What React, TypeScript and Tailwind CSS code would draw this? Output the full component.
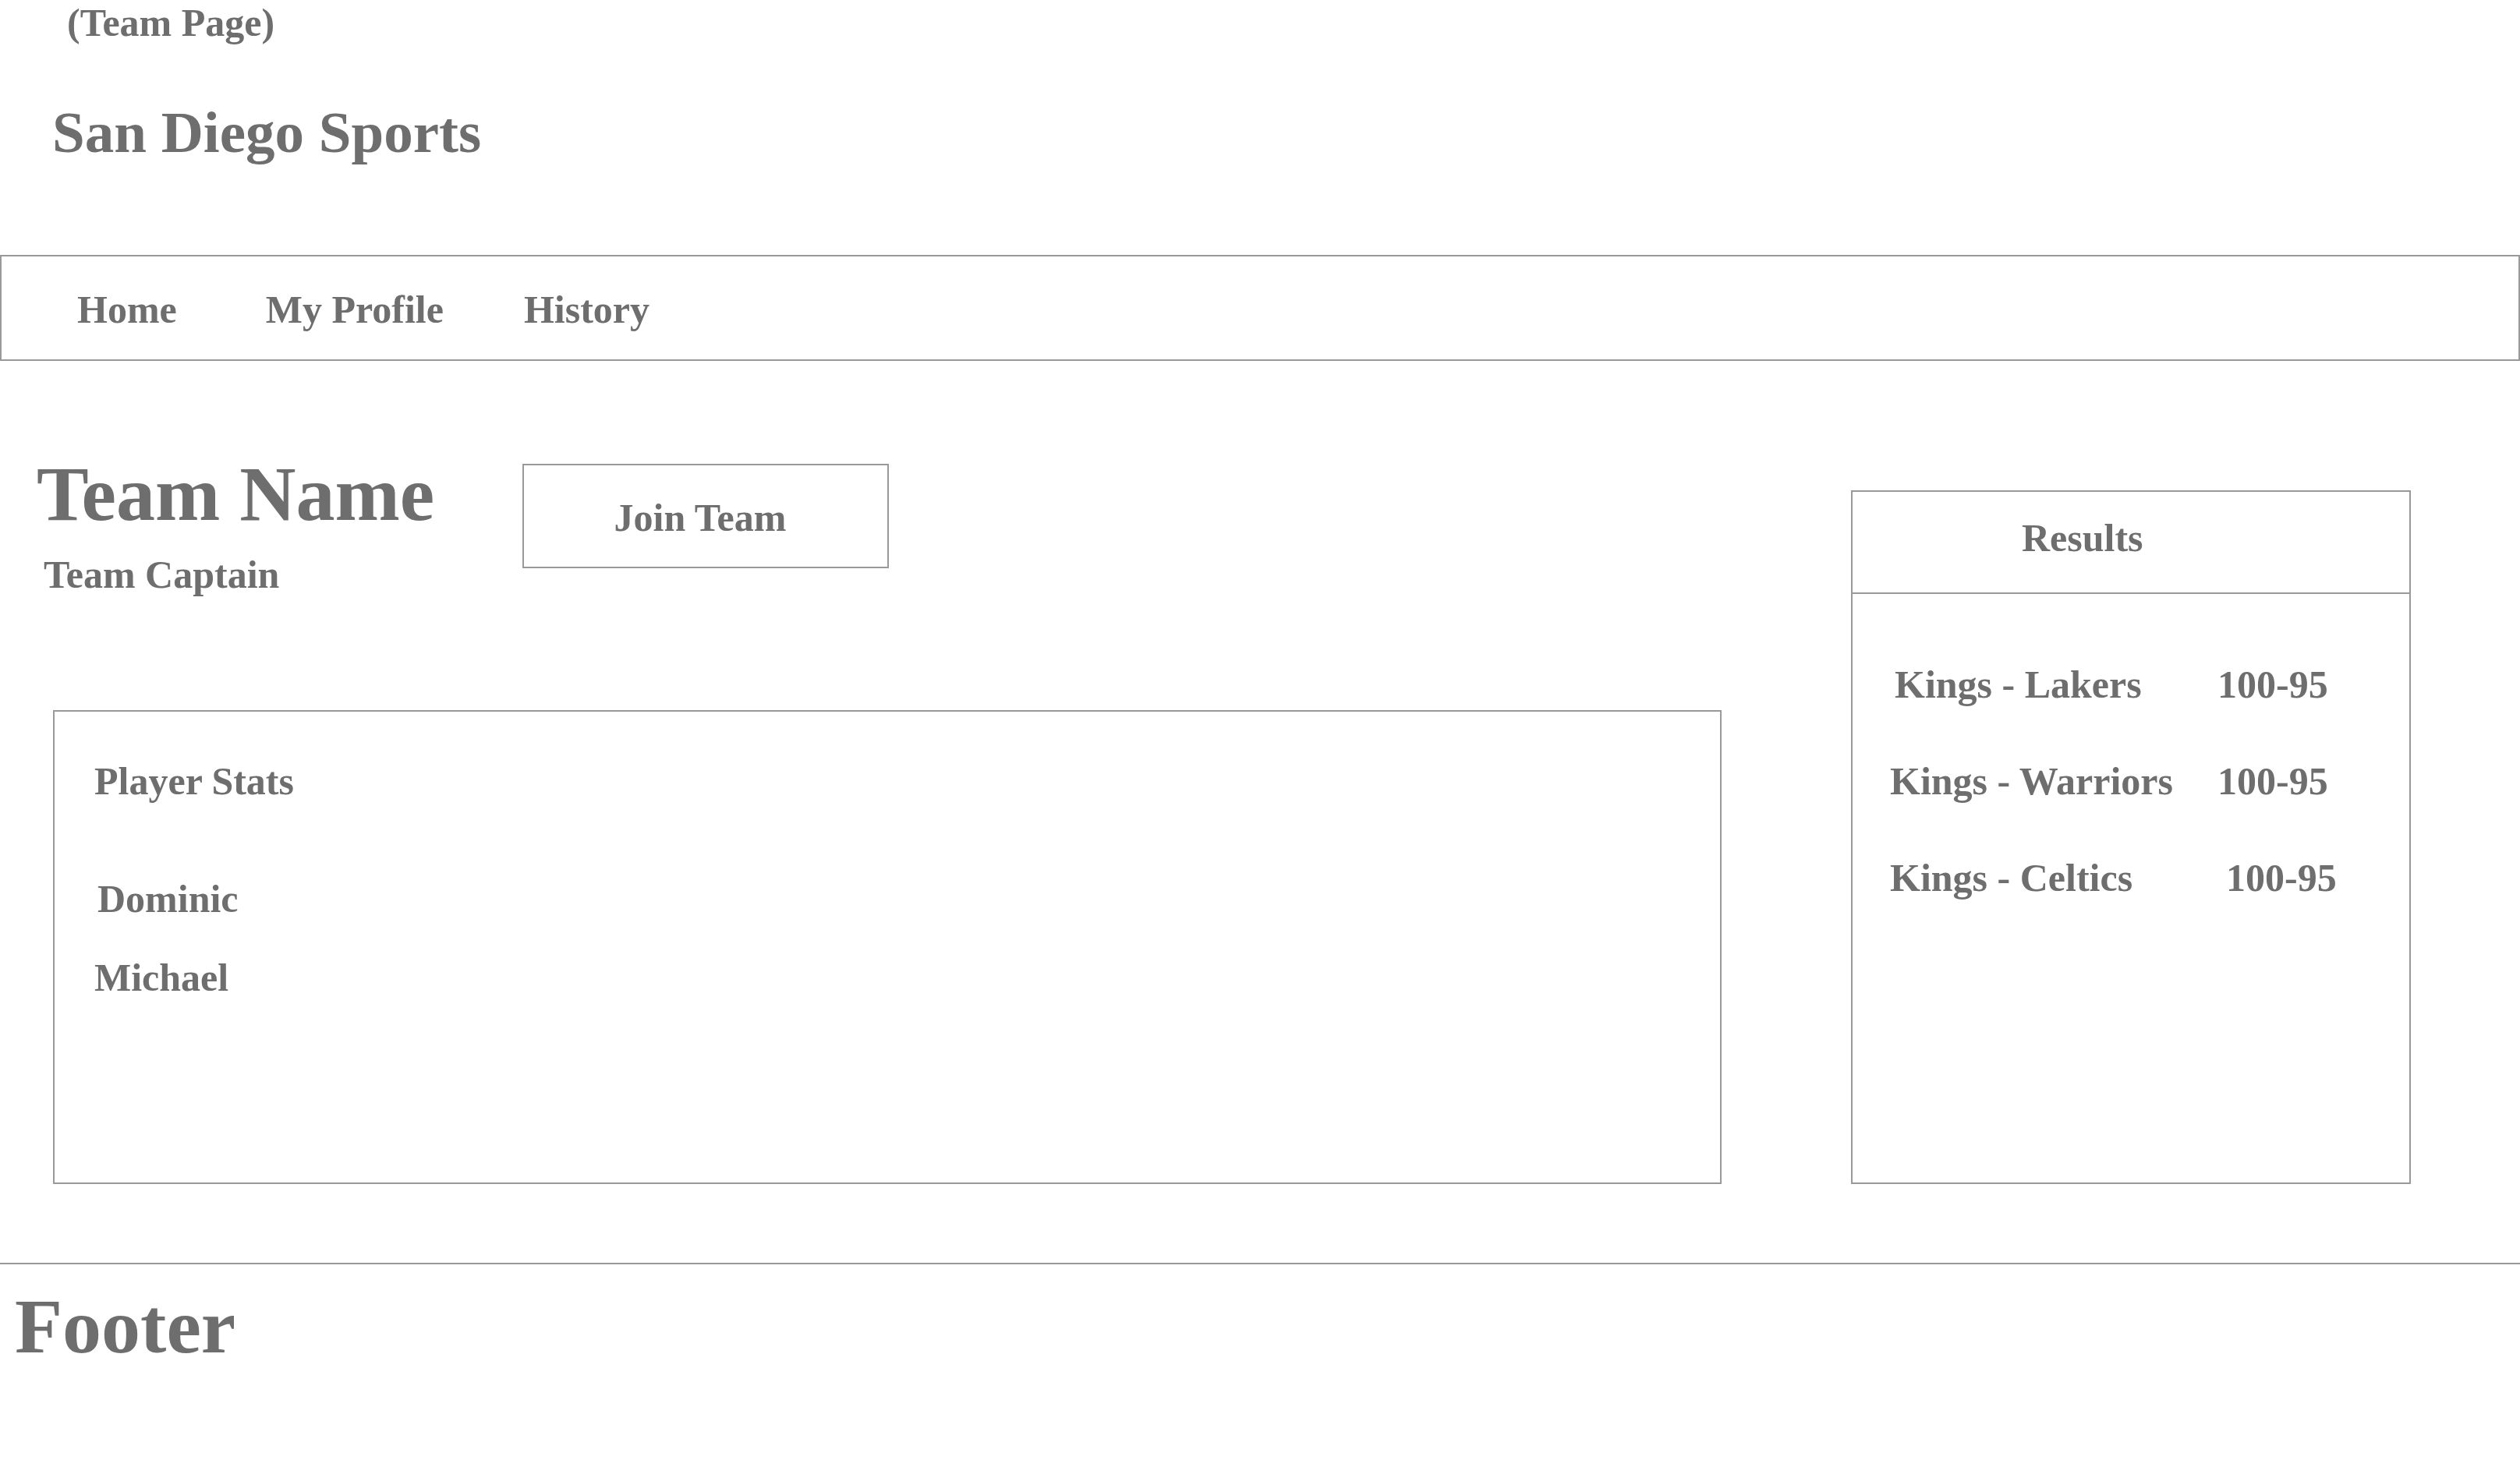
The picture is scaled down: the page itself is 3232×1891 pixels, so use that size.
const results = [
  { match: "Kings - Lakers", score: "100-95", teamPad: "ml-[6px] w-[414px]", scorePad: "" },
  { match: "Kings - Warriors", score: "100-95", teamPad: "w-[420px]", scorePad: "" },
  { match: "Kings - Celtics", score: "100-95", teamPad: "w-[420px]", scorePad: "ml-[11px]" },
];

export default function App() {
  return (
    <div className="min-h-[1891px] w-[3232px] bg-white font-['Liberation_Serif','Times_New_Roman',serif] font-bold text-[#6e6e6e] leading-none">
      {/* header */}
      <header>
        <p className="pl-[86px] pt-[4px] text-[50px]">(Team Page)</p>
        <h1 className="pl-[67px] mt-[78px] text-[75px]">San Diego Sports</h1>
      </header>

      {/* nav */}
      <nav className="mt-[120px] h-[136px] border-2 border-[#999999] flex pt-[43px] text-[50px]">
        <a className="ml-[97px]">Home</a>
        <a className="ml-[114px]">My Profile</a>
        <a className="ml-[103px]">History</a>
      </nav>

      {/* main */}
      <main className="flex items-end">
        <div className="w-[2208px] shrink-0 flex flex-col">
          <div className="flex items-start pl-[47px] pt-[121px]">
            <div className="w-[623px] shrink-0">
              <h2 className="text-[100px]">Team Name</h2>
              <p className="ml-[9px] mt-[28px] text-[50px]">Team Captain</p>
            </div>
            <button className="mt-[11px] w-[470px] h-[134px] border-2 border-[#999999] flex items-center justify-center pr-[14px] pt-[4px] text-[50px] font-bold">
              Join Team
            </button>
          </div>

          <section className="ml-[68px] mt-[149px] w-[2140px] h-[608px] border-2 border-[#999999] pl-[51px] pt-[64px] text-[50px]">
            <h3>Player Stats</h3>
            <p className="ml-[4px] mt-[101px]">Dominic</p>
            <p className="mt-[51px]">Michael</p>
          </section>
        </div>

        <aside className="ml-[166px] w-[718px] h-[890px] border-2 border-[#999999] text-[50px]">
          <div className="h-[131px] border-b-2 border-[#999999] pl-[217px] pt-[34px]">Results</div>
          <ul className="pt-[91px] pl-[48px] flex flex-col gap-[74px]">
            {results.map((r) => (
              <li key={r.match} className="flex">
                <span className={r.teamPad}>{r.match}</span>
                <span className={r.scorePad}>{r.score}</span>
              </li>
            ))}
          </ul>
        </aside>
      </main>

      {/* footer */}
      <footer className="mt-[101px] border-t-2 border-[#999999] pl-[19px] pt-[30px]">
        <p className="text-[100px]">Footer</p>
      </footer>
    </div>
  );
}
